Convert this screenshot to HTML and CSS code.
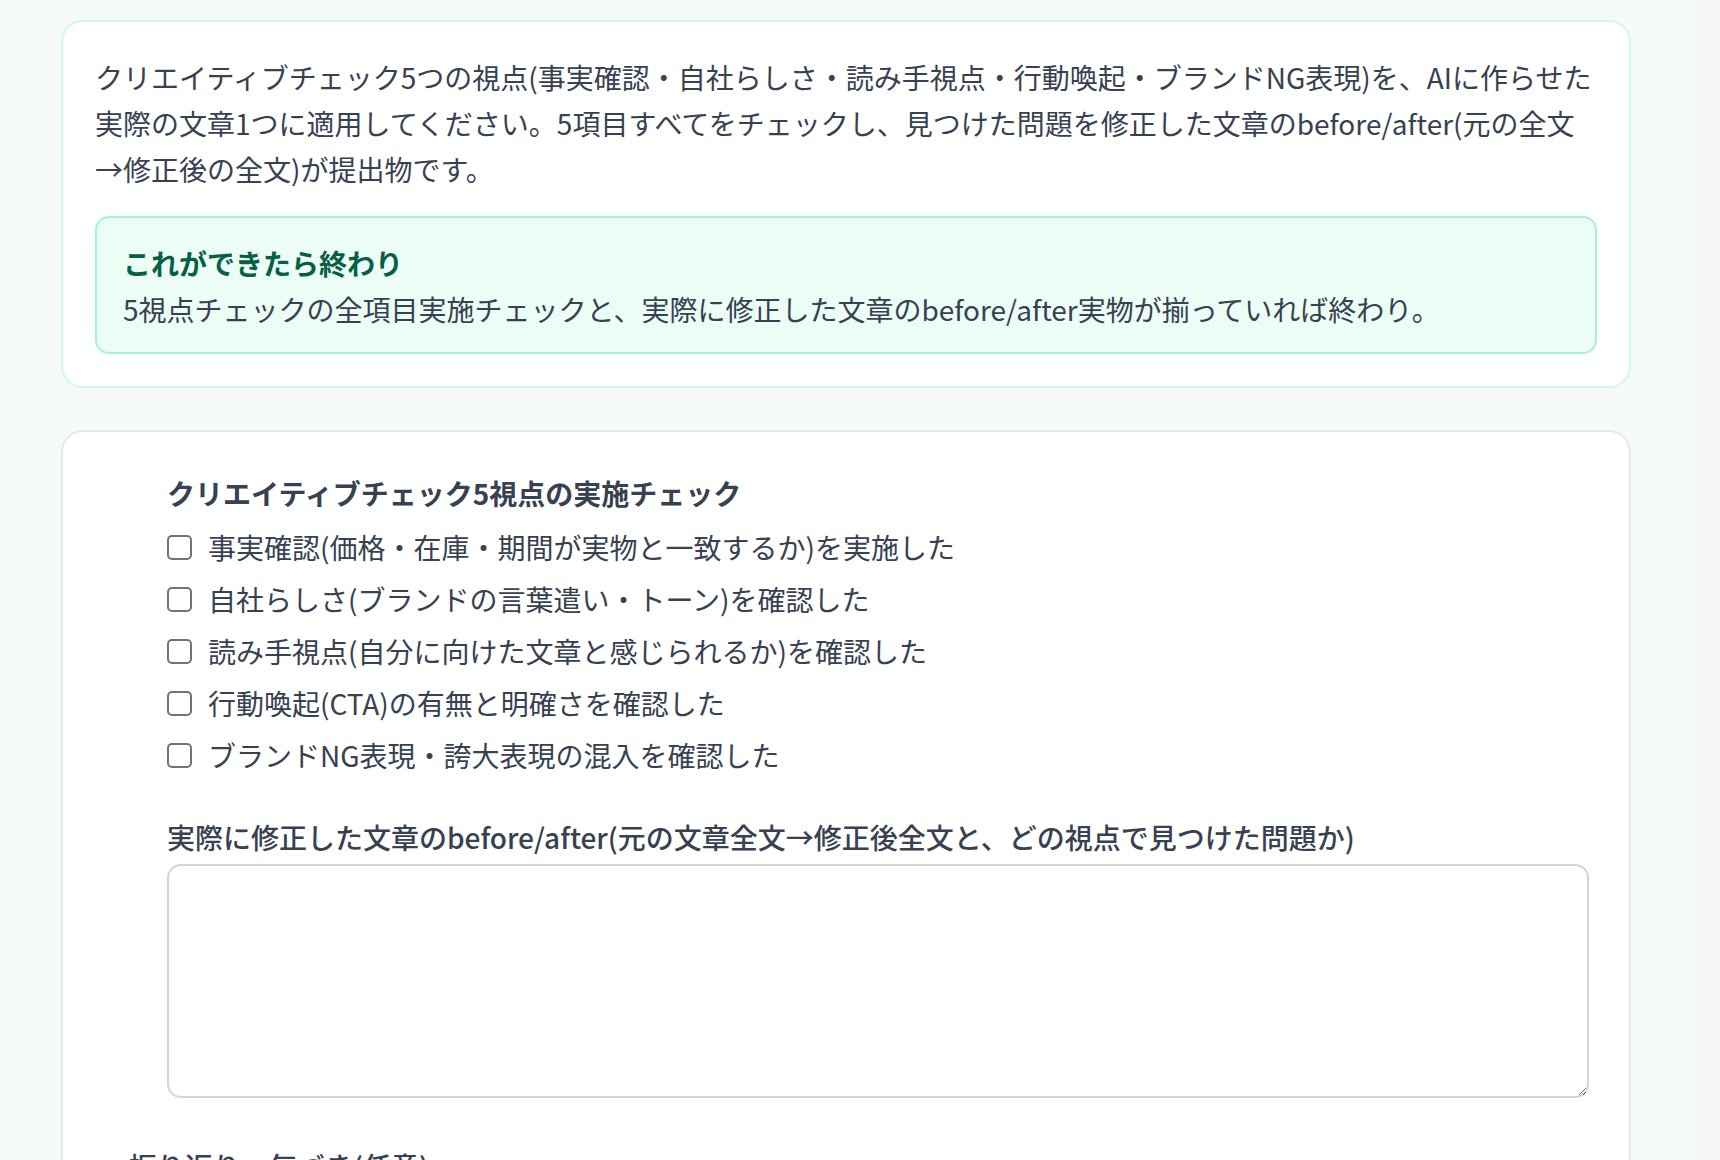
FILE: index.html
```html
<!DOCTYPE html>
<html lang="ja">
<head>
    <meta charset="UTF-8">
    <meta name="viewport" content="width=device-width, initial-scale=1.0">
    <title>クリエイティブチェック</title>
    <link rel="stylesheet" href="styles.css">
</head>
<body>

    <main class="page">

        <!-- 課題の説明 -->
        <section class="card card-intro">
            <p class="intro-text">クリエイティブチェック5つの視点(事実確認・自社らしさ・読み手視点・行動喚起・ブランドNG表現)を、AIに作らせた実際の文章1つに適用してください。5項目すべてをチェックし、見つけた問題を修正した文章のbefore/after(元の全文→修正後の全文)が提出物です。</p>

            <div class="done-box">
                <div class="done-title">これができたら終わり</div>
                <div class="done-text">5視点チェックの全項目実施チェックと、実際に修正した文章のbefore/after実物が揃っていれば終わり。</div>
            </div>
        </section>

        <!-- 提出フォーム -->
        <section class="card card-form">
            <div class="indent">
                <div class="check-title">クリエイティブチェック5視点の実施チェック</div>
                <div class="check-list">
                    <label class="check-row"><input type="checkbox"> 事実確認(価格・在庫・期間が実物と一致するか)を実施した</label>
                    <label class="check-row"><input type="checkbox"> 自社らしさ(ブランドの言葉遣い・トーン)を確認した</label>
                    <label class="check-row"><input type="checkbox"> 読み手視点(自分に向けた文章と感じられるか)を確認した</label>
                    <label class="check-row"><input type="checkbox"> 行動喚起(CTA)の有無と明確さを確認した</label>
                    <label class="check-row"><input type="checkbox"> ブランドNG表現・誇大表現の混入を確認した</label>
                </div>

                <div class="field">
                    <label class="field-label" for="before-after">実際に修正した文章のbefore/after(元の文章全文→修正後全文と、どの視点で見つけた問題か)</label>
                    <textarea id="before-after" class="field-input"></textarea>
                </div>
            </div>

            <div class="field field-note">
                <label class="field-label" for="memo">振り返り・気づき(任意)</label>
                <textarea id="memo" class="field-input"></textarea>
            </div>
        </section>

    </main>

    <!-- 右側のスクロールバー領域 -->
    <div class="scroll-track"></div>

</body>
</html>
```

FILE: styles.css
```css
body {
    margin: 0;
    padding: 0;
    display: flex;
    font-family: "Noto Sans CJK JP", "Noto Sans", sans-serif;
    font-size: 28px;
    line-height: 46px;
    color: #374151;
    background-color: #f6faf8;
}

.page {
    width: 1570px;
    padding: 20px 0 40px 61px;
    flex: 1;
}

.scroll-track {
    width: 24px;
    background-color: #f4f5f7;
}

/* カード共通 */
.card {
    background-color: #fff;
    border: 2px solid #e5e7eb;
    border-radius: 22px;
    width: 1570px;
    box-sizing: border-box;
}

.card-intro {
    border-color: #d1fae5;
    padding: 32px;
}

.intro-text {
    margin: 0;
}

/* 終わりの条件 */
.done-box {
    margin-top: 24px;
    background-color: #ecfdf5;
    border: 2px solid #a7f3d0;
    border-radius: 14px;
    padding: 22px 26px 20px;
}

.done-title {
    font-weight: 700;
    color: #065f46;
}

/* フォーム */
.card-form {
    margin-top: 42px;
    padding: 38px 40px 40px 66px;
}

.indent {
    margin-left: 38px;
}

.check-title {
    font-weight: 700;
    margin-bottom: 8px;
}

.check-list {
    display: flex;
    flex-direction: column;
    gap: 6px;
}

.check-row {
    display: flex;
    align-items: center;
    gap: 16px;
    cursor: pointer;
}

.check-row input {
    appearance: none;
    margin: 0;
    width: 25px;
    height: 25px;
    border: 2px solid #6b7280;
    border-radius: 5px;
    background-color: #fff;
    flex-shrink: 0;
}

.field {
    margin-top: 36px;
}

.field-note {
    margin-top: 45px;
}

.field-label {
    display: block;
    font-weight: 500;
}

.field-input {
    display: block;
    width: 100%;
    height: 234px;
    margin-top: 4px;
    box-sizing: border-box;
    border: 2px solid #d1d5db;
    border-radius: 14px;
    padding: 12px 16px;
    font-family: inherit;
    font-size: 26px;
    color: #374151;
}
```
